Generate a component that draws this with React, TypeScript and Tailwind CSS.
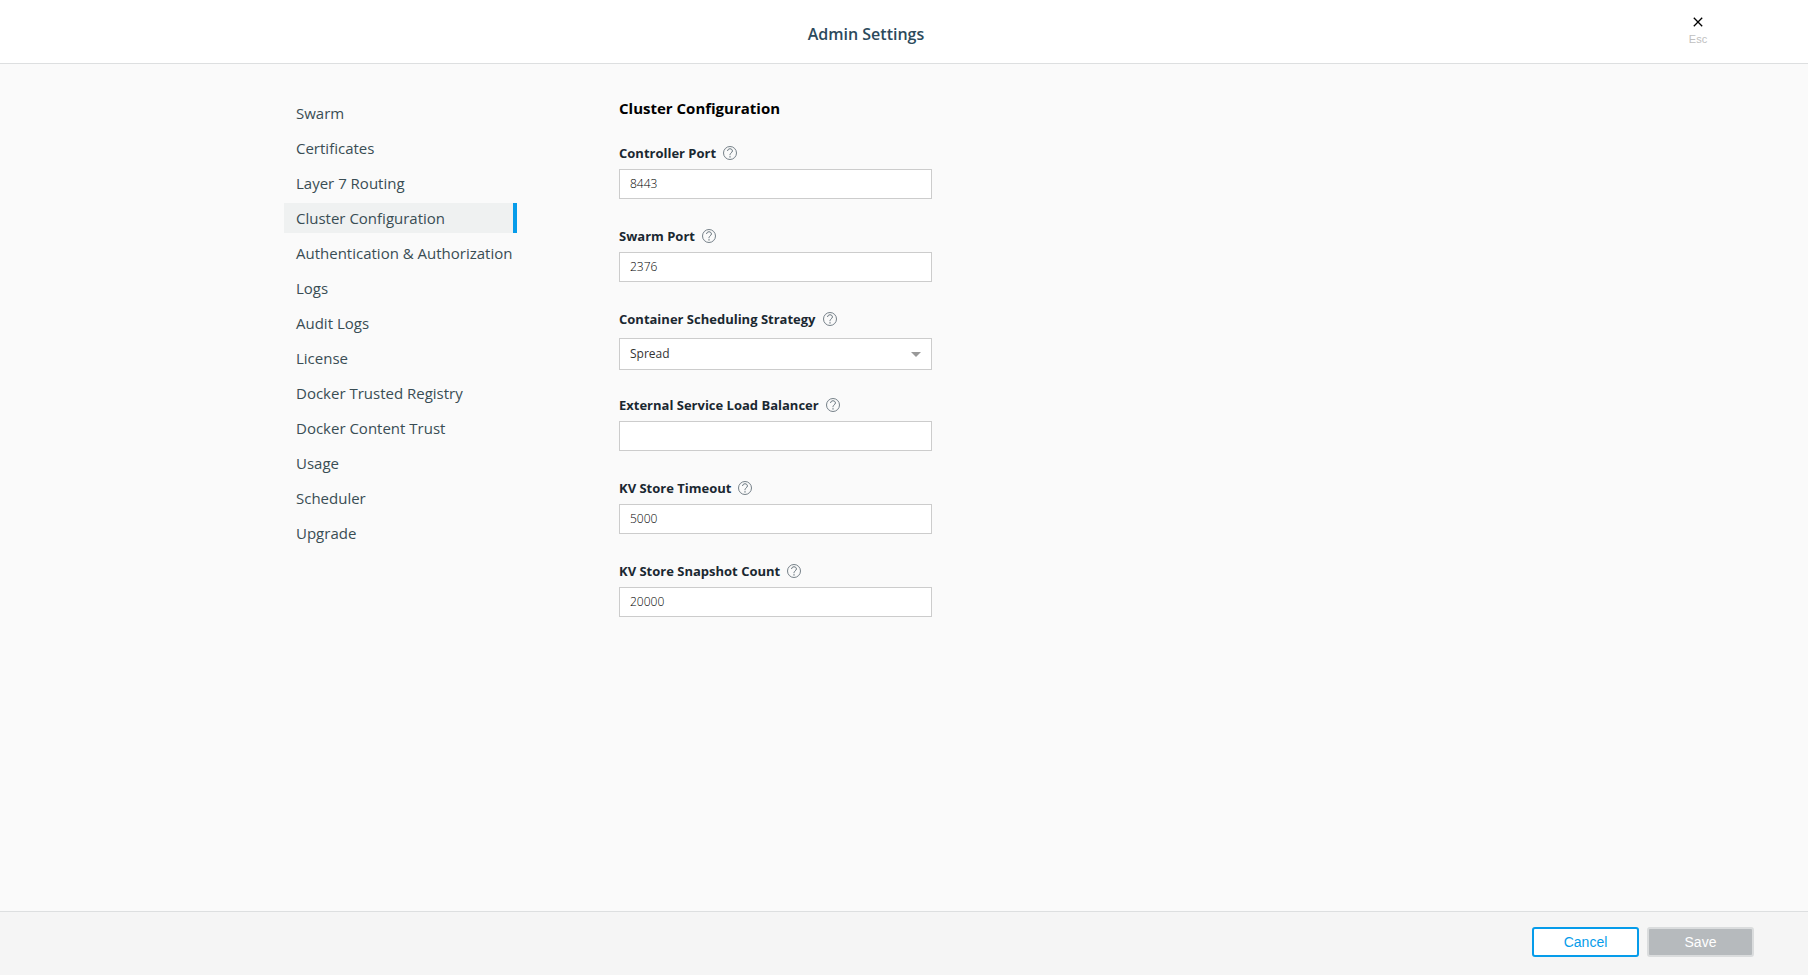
import { useState } from "react";
import type { ReactNode } from "react";
import { clsx } from "clsx";

const NAV_ITEMS = [
  "Swarm",
  "Certificates",
  "Layer 7 Routing",
  "Cluster Configuration",
  "Authentication & Authorization",
  "Logs",
  "Audit Logs",
  "License",
  "Docker Trusted Registry",
  "Docker Content Trust",
  "Usage",
  "Scheduler",
  "Upgrade",
];

const ACTIVE_ITEM = "Cluster Configuration";

/** Circled question mark shown after each field label */
function HelpIcon() {
  return (
    <svg
      viewBox="0 0 14 14"
      className="size-3.5 shrink-0"
      fill="none"
      stroke="#66737c"
      aria-hidden="true"
    >
      <circle cx="7" cy="7" r="6.5" strokeWidth="0.9" />
      <path
        d="M4.6 5C4.6 3.6 5.6 2.8 7 2.8s2.4.8 2.4 2.1c0 1-.6 1.5-1.2 2-.8.6-1.2 1-1.2 2.3"
        strokeWidth="1"
      />
      <path d="M7 10.2v1.2" strokeWidth="1.2" />
    </svg>
  );
}

interface FieldLabelProps {
  htmlFor: string;
  children: ReactNode;
}

function FieldLabel({ htmlFor, children }: FieldLabelProps) {
  return (
    <div className="flex items-center gap-[7px]">
      <label htmlFor={htmlFor} className="text-[13px] leading-5 font-bold text-[#1a2831]">
        {children}
      </label>
      <HelpIcon />
    </div>
  );
}

interface TextFieldProps {
  id: string;
  label: string;
  initial?: string;
}

function TextField({ id, label, initial = "" }: TextFieldProps) {
  const [value, setValue] = useState(initial);

  return (
    <div className="mb-[27px] flex flex-col gap-1.5">
      <FieldLabel htmlFor={id}>{label}</FieldLabel>
      <input
        id={id}
        type="text"
        value={value}
        onChange={(e) => setValue(e.target.value)}
        className="h-[30px] w-full border border-[#cccccc] bg-white px-2.5 pb-0.5 text-xs font-light text-black outline-none focus:border-[#069cea]"
      />
    </div>
  );
}

function StrategyField() {
  return (
    <div className="mb-[25px] flex flex-col gap-[9px]">
      <FieldLabel htmlFor="strategy">Container Scheduling Strategy</FieldLabel>
      <div className="relative">
        <select
          id="strategy"
          defaultValue="spread"
          className="block h-8 w-full appearance-none border border-[#cccccc] bg-white px-2.5 text-xs text-[#333333] outline-none focus:border-[#069cea]"
        >
          <option value="spread">Spread</option>
          <option value="binpack">Binpack</option>
          <option value="random">Random</option>
        </select>
        <svg
          viewBox="0 0 10 5"
          className="pointer-events-none absolute top-3.5 right-[11px] h-[5px] w-2.5"
          fill="#999999"
          aria-hidden="true"
        >
          <path d="M0 0h10L5 5z" />
        </svg>
      </div>
    </div>
  );
}

function Header() {
  return (
    <header className="flex h-16 shrink-0 border-b border-[#dddfe0] bg-white pr-[76px]">
      <div className="flex-1" />
      <h1 className="mt-[22px] text-base leading-6 font-semibold text-[#2c4a5c]">
        Admin Settings
      </h1>
      <div className="flex flex-1 justify-end">
        <button
          type="button"
          aria-label="Close"
          className="mt-[17px] flex w-[68px] cursor-pointer flex-col items-center gap-1.5 self-start"
        >
          <svg viewBox="0 0 10 10" className="size-2.5" stroke="#000000" strokeWidth="1.3" aria-hidden="true">
            <path d="M.8.8l8.4 8.4M9.2.8L.8 9.2" />
          </svg>
          <span className="font-['Liberation_Sans',Arial,sans-serif] text-[11px] leading-3 text-[#c0c0c0]">
            Esc
          </span>
        </button>
      </div>
    </header>
  );
}

function SideNav() {
  return (
    <nav className="w-[233px] shrink-0">
      <ul className="flex flex-col gap-[5px]">
        {NAV_ITEMS.map((item) => (
          <li key={item}>
            <a
              href="#"
              aria-current={item === ACTIVE_ITEM ? "page" : undefined}
              className={clsx(
                "block border-r-4 pl-3 text-[15px] leading-[30px] whitespace-nowrap text-[#394d54]",
                item === ACTIVE_ITEM
                  ? "border-[#069cea] bg-[#eff1f1]"
                  : "border-transparent"
              )}
            >
              {item}
            </a>
          </li>
        ))}
      </ul>
    </nav>
  );
}

export default function App() {
  return (
    <div className="flex min-h-screen flex-col bg-[#fafafa] font-['Open_Sans',sans-serif]">
      <Header />

      <main className="mx-auto flex w-full max-w-[1240px] flex-1 gap-[102px] pt-[34px]">
        <SideNav />
        <form id="cluster-form" className="w-[313px]" onSubmit={(e) => e.preventDefault()}>
          <h2 className="mb-[25px] text-[15px] leading-5 font-bold text-black">
            Cluster Configuration
          </h2>
          <TextField id="controller-port" label="Controller Port" initial="8443" />
          <TextField id="swarm-port" label="Swarm Port" initial="2376" />
          <StrategyField />
          <TextField id="load-balancer" label="External Service Load Balancer" />
          <TextField id="kv-timeout" label="KV Store Timeout" initial="5000" />
          <TextField id="kv-snapshot" label="KV Store Snapshot Count" initial="20000" />
        </form>
      </main>

      <footer className="flex h-16 shrink-0 items-start justify-end gap-2 border-t border-[#dddfe0] bg-[#f5f5f5] px-[54px] pt-[15px] font-['Liberation_Sans',Arial,sans-serif] text-sm">
        <button
          type="button"
          className="h-[30px] w-[107px] cursor-pointer rounded-[3px] border-2 border-[#069cea] bg-white text-[#069cea]"
        >
          Cancel
        </button>
        <button
          type="submit"
          form="cluster-form"
          className="h-[30px] w-[107px] rounded-[3px] border-2 border-[#dadcdd] bg-[#b6babd] text-white"
        >
          Save
        </button>
      </footer>
    </div>
  );
}
